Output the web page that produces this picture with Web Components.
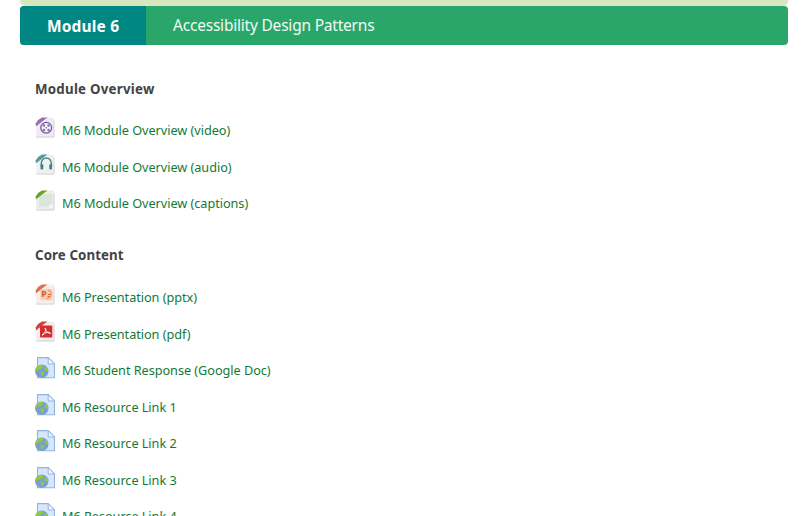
<!DOCTYPE html>
<html lang="en"><head><meta charset="utf-8"><title>Module 6</title>
<style>html,body{margin:0;background:#fff;height:516px;overflow:hidden;font-family:"Noto Sans",sans-serif}</style></head>
<body>
<course-page>
<module-banner label="Module 6">Accessibility Design Patterns</module-banner>
<content-section heading="Module Overview">
<resource-link kind="video">M6 Module Overview (video)</resource-link>
<resource-link kind="audio">M6 Module Overview (audio)</resource-link>
<resource-link kind="captions">M6 Module Overview (captions)</resource-link>
</content-section>
<content-section heading="Core Content">
<resource-link kind="pptx">M6 Presentation (pptx)</resource-link>
<resource-link kind="pdf">M6 Presentation (pdf)</resource-link>
<resource-link kind="web">M6 Student Response (Google Doc)</resource-link>
<resource-link kind="web">M6 Resource Link 1</resource-link>
<resource-link kind="web">M6 Resource Link 2</resource-link>
<resource-link kind="web">M6 Resource Link 3</resource-link>
<resource-link kind="web">M6 Resource Link 4</resource-link>
</content-section>
</course-page>
<script>
class CoursePage extends HTMLElement{constructor(){super();this.attachShadow({mode:'open'}).innerHTML=`
<style>:host{display:flex;flex-direction:column;height:516px;overflow:hidden;padding:0 15px 0 20px;box-sizing:border-box}
.previous{height:6px;flex:none;background:#d7e8c1;border-radius:0 0 5px 5px}</style>
<div class="previous"></div><slot></slot>`}}
class ModuleBanner extends HTMLElement{constructor(){super();this.attachShadow({mode:'open'}).innerHTML=`
<style>:host{display:flex;flex:none;height:39px;border-radius:4px;overflow:hidden;background:#2ba66a;color:#effaf2;font-size:15.5px;line-height:39px;margin-bottom:27px}
b{width:126px;box-sizing:border-box;padding-left:27px;background:#008784;color:#fff;font-size:15.5px;letter-spacing:.15px;line-height:40px}
span{padding-left:27px;white-space:nowrap;letter-spacing:-.21px}</style><b></b><span><slot></slot></span>`}
connectedCallback(){this.shadowRoot.querySelector('b').textContent=this.getAttribute('label')}}
class ContentSection extends HTMLElement{constructor(){super();this.attachShadow({mode:'open'}).innerHTML=`
<style>:host{display:block;flex:none;padding-left:15px;margin-bottom:16.5px}
h3{margin:0;height:40px;font-size:13.3px;letter-spacing:.25px;line-height:34px;color:#444;font-weight:700}
:host(:last-of-type) h3{height:41.3px;letter-spacing:.1px}</style><h3></h3><slot></slot>`}
connectedCallback(){this.shadowRoot.querySelector('h3').textContent=this.getAttribute('heading')}}
const page=(stripe,tint)=>`<path d="M8 .8H19V20H1.3V8Z" fill="${tint}"/><path d="M19 3.5V20.1H1" fill="none" stroke="#d0cdd0" stroke-width=".9"/><path d="M.8 9.5V6.2Q3 2 7 .4H12.5Z" fill="${stripe}"/><path d="M1.4 10L12 1L9 5L4.5 7.4Z" fill="#fff" opacity=".75"/>`;
const icons={
video:page('#9b6eb7','#eeebf1')+`<circle cx="11.2" cy="10.7" r="5.4" fill="#f5f0fa" stroke="#765c9d" stroke-width="1.3"/><g fill="#8669aa"><circle cx="8.9" cy="8.5" r="1.2"/><circle cx="13.5" cy="8.5" r="1.2"/><circle cx="8.9" cy="13" r="1.2"/><circle cx="13.5" cy="13" r="1.2"/><circle cx="11.2" cy="10.7" r=".8"/></g>`,
audio:page('#559b91','#edf2f1')+`<path d="M6.3 12V9.5A5 5.6 0 0 1 16.3 9.5V12" fill="none" stroke="#4f858e" stroke-width="1.5"/><rect x="5.5" y="10.2" width="2.8" height="5.4" rx="1" fill="#477d86"/><rect x="14.3" y="10.2" width="2.8" height="5.4" rx="1" fill="#477d86"/>`,
captions:page('#66a52b','#e9efe8')+`<path d="M8 4H17V16.5H4V8Z" fill="#dce5d9"/><path d="M14 14.5H18V18H14Z" fill="#f3f7f1"/>`,
pptx:page('#df704c','#f7eeea')+`<rect x="5.3" y="4.8" width="12" height="11.4" rx="1.5" fill="#f8cdb5"/><path d="M13 6Q17.5 8 16 12L12 15" fill="none" stroke="#ef9872" stroke-width="1.3"/><text x="6.2" y="13.4" font-family="Noto Sans,sans-serif" font-size="8.5" font-weight="700" fill="#d9532c">P</text><path d="M12.7 10.5h3M12.5 12.5h2.3" stroke="#de663e"/>`,
pdf:page('#cf4441','#f2eded')+`<rect x="5" y="4.6" width="12.3" height="11.8" rx="1" fill="#d62d31"/><path d="M7 14.2C10 12.2 11.5 9 10.5 7.1C9.5 6.5 10.5 11.3 15 12.5C16 12.6 15.5 11.2 12.8 11.3Q9.5 11.5 7 14.2" fill="none" stroke="#fff" stroke-width=".9"/>`,
web:`<path d="M2.5 .6H13.2L19.5 7V20.8H2.5Z" fill="#d5e8fb" stroke="#91b4e1" stroke-width="1.1"/><path d="M13.2 .6V7H19.5Z" fill="#f2f8fe" stroke="#91b4e1"/><circle cx="6.8" cy="14.2" r="6.7" fill="#789fd1"/><path d="M2 10L5 8L8.5 8.5L8 10.3L6 11L5.5 12.5L3 12.5L1 14.2L.6 12.3ZM10.5 9.8L12.8 12.5L12.6 14.8L10 13.5L9.5 11.5ZM5.5 14.2L8.2 14.7L9 16.4L6.8 19.8L6 17.2Z" fill="#94cc35"/>`};
class ResourceLink extends HTMLElement{constructor(){super();this.attachShadow({mode:'open'}).innerHTML=`
<style>:host{display:block;height:36.5px}a{display:flex;height:36px;align-items:center;color:#137a36;text-decoration:none;font-size:12.7px;letter-spacing:-.04px;white-space:nowrap;gap:7px}
svg{width:20px;height:21px;flex:none;overflow:visible;margin-bottom:5px}</style><a><svg viewBox="0 0 20 21"></svg><span><slot></slot></span></a>`}
connectedCallback(){this.shadowRoot.querySelector('svg').innerHTML=icons[this.getAttribute('kind')]}}
customElements.define('course-page',CoursePage);customElements.define('module-banner',ModuleBanner);customElements.define('content-section',ContentSection);customElements.define('resource-link',ResourceLink);
</script></body></html>
